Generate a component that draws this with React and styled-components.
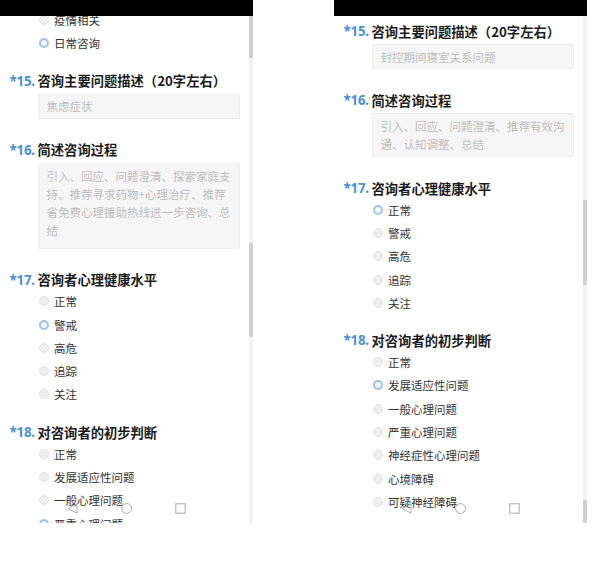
import React from 'react';
import styled, { createGlobalStyle } from 'styled-components';

const levels = ['正常', '警戒', '高危', '追踪', '关注'];
const judgments = ['正常', '发展适应性问题', '一般心理问题', '严重心理问题', '神经症性心理问题', '心境障碍', '可疑神经障碍'];

const phones = [
  {
    offset: -8,
    thumbs: [{ top: 0, height: 42 }, { top: 227, height: 94 }],
    blocks: [
      { kind: 'radio', options: ['疫情相关', '日常咨询'], selected: 1 },
      { kind: 'input', no: 15, title: '咨询主要问题描述（20字左右）', text: '焦虑症状' },
      { kind: 'textarea', no: 16, title: '简述咨询过程', height: 86,
        text: '引入、回应、问题澄清、探索家庭支持、推荐寻求药物+心理治疗、推荐省免费心理援助热线进一步咨询、总结' },
      { kind: 'radio', no: 17, title: '咨询者心理健康水平', options: levels, selected: 1 },
      { kind: 'radio', no: 18, title: '对咨询者的初步判断', options: judgments, selected: 3 },
    ],
  },
  {
    offset: 5,
    thumbs: [{ top: 184, height: 85 }, { top: 484, height: 23 }],
    blocks: [
      { kind: 'input', no: 15, title: '咨询主要问题描述（20字左右）', text: '封控期间寝室关系问题' },
      { kind: 'textarea', no: 16, title: '简述咨询过程', height: 44,
        text: '引入、回应、问题澄清、推荐有效沟通、认知调整、总结' },
      { kind: 'radio', no: 17, title: '咨询者心理健康水平', options: levels, selected: 0 },
      { kind: 'radio', no: 18, title: '对咨询者的初步判断', options: judgments, selected: 1 },
    ],
  },
];

function Block({ block }) {
  const { kind, no, title } = block;
  return (
    <Question>
      {title && (
        <Title $tight={kind === 'radio'}>
          <Num>*{no}.</Num>
          <span>{title}</span>
        </Title>
      )}
      {kind === 'input' && <Input>{block.text}</Input>}
      {kind === 'textarea' && <TextArea $height={block.height}>{block.text}</TextArea>}
      {kind === 'radio' && (
        <OptionList>
          {block.options.map((o, i) => (
            <Option key={o}>
              <Radio $on={i === block.selected} />
              {o}
            </Option>
          ))}
        </OptionList>
      )}
    </Question>
  );
}

function NavBar() {
  return (
    <Nav>
      <svg width="11" height="11" viewBox="0 0 11 11">
        <polygon points="10,0.8 10,10.2 1.2,5.5" fill="none" stroke="#a8a8a8" strokeWidth="1" />
      </svg>
      <svg width="11" height="11" viewBox="0 0 11 11">
        <circle cx="5.5" cy="5.5" r="4.9" fill="none" stroke="#a8a8a8" strokeWidth="1" />
      </svg>
      <svg width="11" height="11" viewBox="0 0 11 11">
        <rect x="0.8" y="0.8" width="9.4" height="9.4" fill="none" stroke="#a8a8a8" strokeWidth="1" />
      </svg>
    </Nav>
  );
}

function PhoneShot({ phone }) {
  return (
    <Phone>
      <StatusBar />
      <Viewport>
        <Content $offset={phone.offset}>
          {phone.blocks.map((b, i) => <Block key={i} block={b} />)}
        </Content>
        <Track>
          {phone.thumbs.map((t, i) => <Thumb key={i} $top={t.top} $height={t.height} />)}
        </Track>
        <NavBar />
      </Viewport>
    </Phone>
  );
}

export default function App() {
  return (
    <>
      <Global />
      <Page>
        {phones.map((p, i) => <PhoneShot key={i} phone={p} />)}
      </Page>
    </>
  );
}

const Global = createGlobalStyle`
  body{
    margin:0;
    background:#fff;
    font-family:"Noto Sans CJK SC","Noto Sans",sans-serif;
    text-spacing-trim:space-all;
  }
`
const Page = styled.div`
  display:flex;
  gap:81px;
  width:592px;
  height:564px;
  background:#fff;
`
const Phone = styled.div`
  width:253px;
  height:523px;
  display:flex;
  flex-direction:column;
  background:#fff;
`
const StatusBar = styled.div`
  height:16px;
  background:#000;
  flex-shrink:0;
`
const Viewport = styled.div`
  position:relative;
  flex:1;
  overflow:hidden;
`
const Content = styled.div`
  margin-top:${p => p.$offset}px;
`
const Question = styled.div``
const Title = styled.div`
  display:flex;
  align-items:center;
  height:20px;
  margin-bottom:${p => (p.$tight ? 0 : 3)}px;
  font-size:13.3px;
  font-weight:bold;
  color:#1c1c1c;
  white-space:nowrap;
`
const Num = styled.span`
  flex-shrink:0;
  width:37.5px;
  padding-left:9.5px;
  box-sizing:border-box;
  color:#4a8fdc;
  font-family:"Noto Sans","Noto Sans CJK SC",sans-serif;
  letter-spacing:-0.2px;
`
const Input = styled.div`
  margin:0 0 21px 37.5px;
  width:202px;
  height:25px;
  box-sizing:border-box;
  padding:0 8px;
  display:flex;
  align-items:center;
  background:#f6f6f6;
  border:1px solid #ececec;
  border-radius:2px;
  color:#bdbdbd;
  font-size:11.5px;
`
const TextArea = styled.div`
  margin:0 0 21px 37.5px;
  width:202px;
  height:${p => p.$height}px;
  box-sizing:border-box;
  padding:3px 5px 0 8px;
  background:#f6f6f6;
  border:1px solid #ececec;
  border-radius:2px;
  color:#bdbdbd;
  font-size:11.5px;
  line-height:18.3px;
`
const OptionList = styled.div`
  margin-bottom:16px;
`
const Option = styled.div`
  display:flex;
  align-items:center;
  gap:5px;
  height:23.3px;
  padding-left:39px;
  font-size:11.5px;
  color:#333;
`
const Radio = styled.span`
  width:10px;
  height:10px;
  box-sizing:border-box;
  border-radius:50%;
  flex-shrink:0;
  background:${p => (p.$on ? '#f3f7fd' : '#eeeeee')};
  border:${p => (p.$on ? '2px solid #9fc0ea' : '1px solid #e2e2e2')};
`
const Track = styled.div`
  position:absolute;
  top:0;
  right:0;
  bottom:0;
  width:4px;
  background:#f3f3f3;
`
const Thumb = styled.div`
  position:absolute;
  left:0;
  width:4px;
  top:${p => p.$top}px;
  height:${p => p.$height}px;
  background:#cfcfcf;
`
const Nav = styled.div`
  position:absolute;
  left:0;
  right:4px;
  top:487px;
  display:flex;
  justify-content:center;
  gap:43px;
  padding-left:4px;
  svg{ display:block; }
`
